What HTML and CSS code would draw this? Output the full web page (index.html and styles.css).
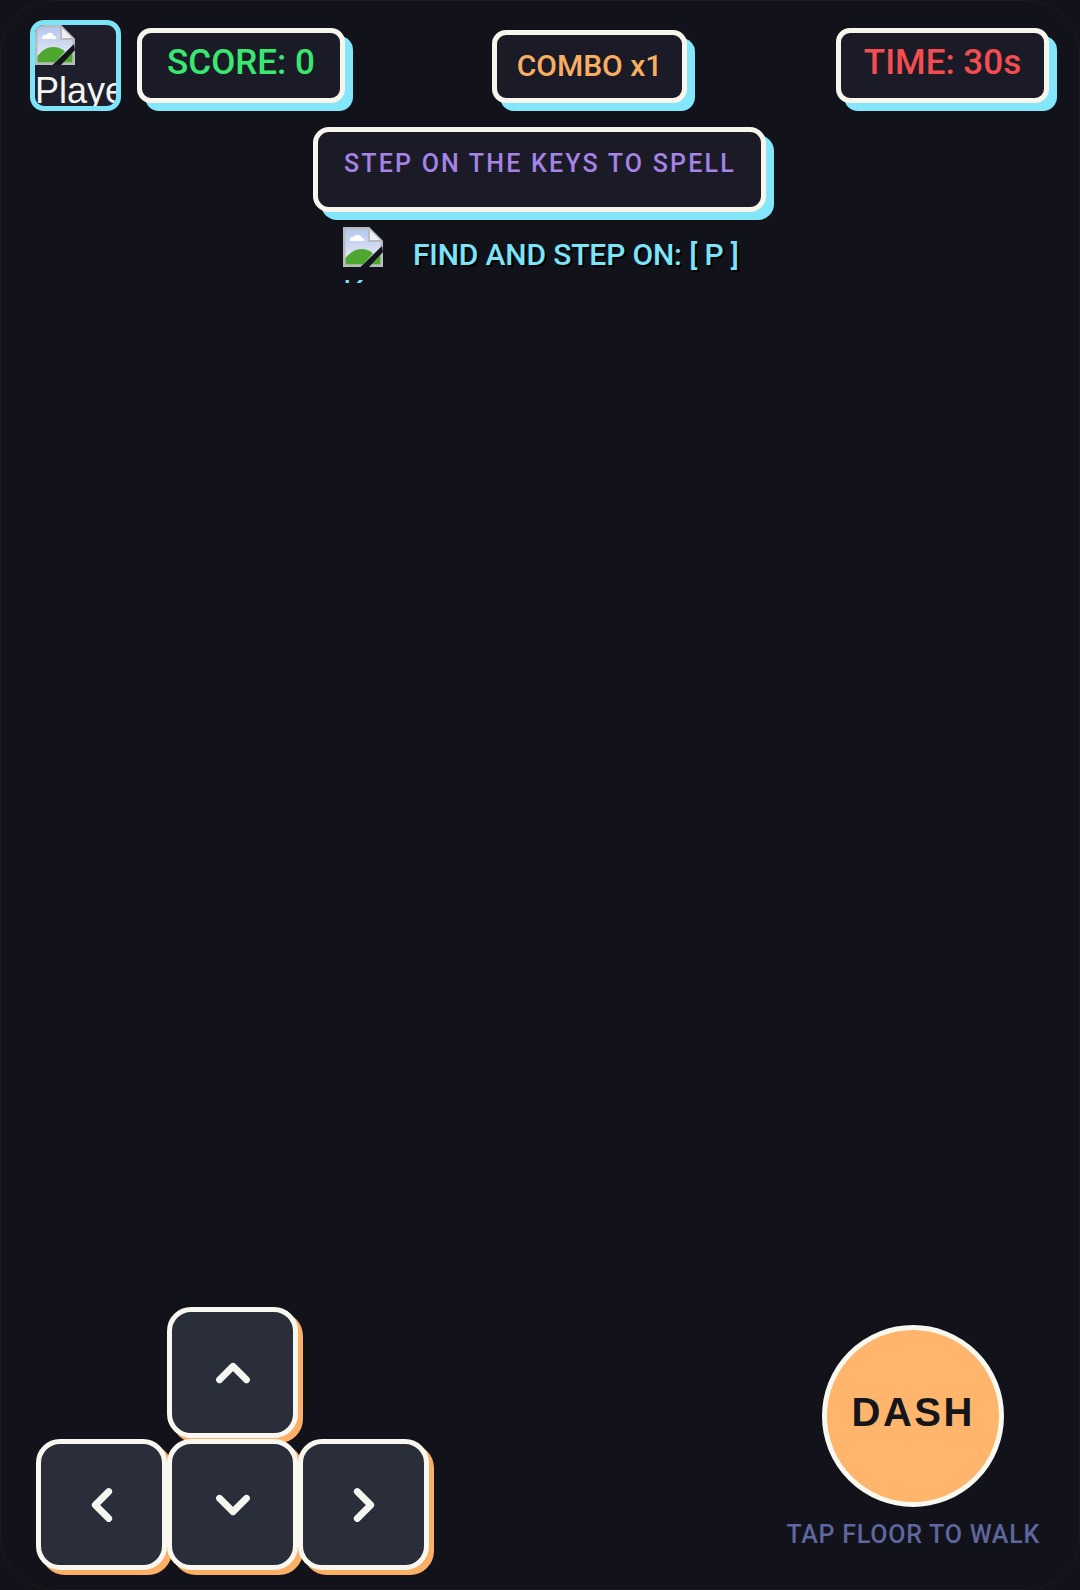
FILE: index.html
```html
<!DOCTYPE html>
<html lang="en">
<head>
<meta charset="utf-8">
<title>Key Dash</title>
<link rel="stylesheet" href="styles.css">
</head>
<body>
<svg class="defs" width="0" height="0" aria-hidden="true">
  <defs>
    <linearGradient id="sky" x1="0" y1="0" x2="0" y2="1">
      <stop offset="0" stop-color="#b4c8ee"/>
      <stop offset="1" stop-color="#eceef6"/>
    </linearGradient>
  </defs>
  <symbol id="broken" viewBox="0 0 16 16">
    <path d="M0 0H10.5L16 5.5V16H0Z" fill="#b9bbc0"/>
    <path d="M1 1H10V6H15V15H1Z" fill="url(#sky)"/>
    <path d="M10.8 1.2L14.8 5.2H10.8Z" fill="#eef0f4"/>
    <path d="M2.8 5.6a1.3 1.3 0 0 1 1.6-1.6a1.7 1.7 0 0 1 3.1 .2a1.1 1.1 0 0 1 .9 1.4Z" fill="#fff"/>
    <path d="M1 15V12.4C3 10 5 8.8 7.3 8.8C9.2 8.8 10.8 9.4 12 10.6L8 15Z" fill="#4ea72e"/>
    <path d="M12.6 12.4L15 11V15H11Z" fill="#4ea72e"/>
    <path d="M7 16L15.6 7.6L16 10L10.4 16Z" fill="#14141c"/>
  </symbol>
</svg>
<main class="frame">
  <div class="top">
    <header class="hud">
      <div class="hud-left">
        <div class="avatar">
          <svg class="broken"><use href="#broken"/></svg>
          <span class="avatar-alt">Player</span>
        </div>
        <div class="chip chip-score">SCORE: 0</div>
      </div>
      <div class="chip chip-combo">COMBO x1</div>
      <div class="chip chip-time">TIME: 30s</div>
    </header>
    <div class="banner">STEP ON THE KEYS TO SPELL</div>
    <div class="target">
      <div class="target-key">
        <svg class="broken"><use href="#broken"/></svg>
        <span class="target-alt">Key</span>
      </div>
      <span class="target-text">FIND AND STEP ON: [ P ]</span>
    </div>
  </div>
  <div class="controls">
    <div class="dpad">
      <button class="key key-up" aria-label="Up"><svg viewBox="0 0 32 32"><path d="M4 22L16 10L28 22"/></svg></button>
      <button class="key key-left" aria-label="Left"><svg viewBox="0 0 32 32"><path d="M22 4L10 16L22 28"/></svg></button>
      <button class="key key-down" aria-label="Down"><svg viewBox="0 0 32 32"><path d="M4 10L16 22L28 10"/></svg></button>
      <button class="key key-right" aria-label="Right"><svg viewBox="0 0 32 32"><path d="M10 4L22 16L10 28"/></svg></button>
    </div>
    <div class="action">
      <button class="dash">DASH</button>
      <div class="tip">TAP FLOOR TO WALK</div>
    </div>
  </div>
</main>
</body>
</html>
```
FILE: styles.css
```css
* { box-sizing: border-box; }
html, body { margin: 0; padding: 0; background: #12121a; }
body { width: 1080px; height: 1590px; overflow: hidden; font-family: Roboto, "Liberation Sans", Arial, sans-serif; }
.defs { position: absolute; }
.frame {
  width: 1080px; height: 1590px; display: flex; flex-direction: column; justify-content: space-between;
  background: #12121a; border-radius: 54px; box-shadow: inset 0 0 0 1px #1a1a1f; overflow: hidden;
}
.hud { display: flex; justify-content: space-between; align-items: center; padding: 20px 31px 0 30px; }
.hud-left { display: flex; align-items: center; gap: 16px; }
.avatar {
  width: 91px; height: 91px; border: 5px solid #7ce3f8; border-radius: 14px; background: #1e1e2c; overflow: hidden;
  color: #f5f5f0; font-family: "Liberation Sans", Arial, sans-serif; font-size: 36px; line-height: 40px; white-space: nowrap;
}
.broken { display: block; width: 40px; height: 40px; }
.avatar-alt { display: block; margin-top: 6px; }
.chip {
  display: flex; align-items: center; justify-content: center; background: #1b1b28;
  border: 5px solid #f8f6ec; border-radius: 14px; box-shadow: 8px 8px 0 #84e6fb;
  font-size: 35px; font-weight: 500; white-space: nowrap;
}
.chip-score { width: 208px; height: 75px; color: #39e86f; padding-bottom: 6px; }
.chip-combo { width: 195px; height: 73px; margin: 2px 2px 0 0; padding-bottom: 2px; color: #f9ae61; font-size: 30px; }
.chip-time { width: 213px; height: 75px; color: #f34d4f; padding-bottom: 6px; }
.banner {
  width: 453px; height: 85px; margin: 16px 0 0 313px; padding: 18px 0 0 26px; background: #1b1b28;
  border: 5px solid #f8f6ec; border-radius: 16px; box-shadow: 8px 8px 0 #84e6fb;
  color: #a683e6; font-size: 25px; font-weight: 500; line-height: 28px; letter-spacing: 2.2px; white-space: nowrap;
}
.target { display: flex; gap: 13px; margin: 15px 0 0 343px; color: #7ce3f8; }
.target-key { width: 57px; height: 56px; overflow: hidden; font-size: 33px; line-height: 34px; }
.target-alt { display: block; margin-top: 9px; }
.target-text { font-size: 30px; font-weight: 500; letter-spacing: -0.15px; line-height: 34px; padding-top: 11px; text-shadow: 2px 2px 0 #000; white-space: nowrap; }
.controls { display: flex; justify-content: space-between; align-items: flex-start; padding: 0 40px 20px 36px; }
.dpad { display: grid; grid-template-columns: repeat(3, 130px); grid-template-rows: repeat(2, 131px); gap: 1px; }
.key {
  display: flex; align-items: center; justify-content: center; padding: 0; width: 131px; height: 131px;
  background: #2a2d3a; border: 5px solid #f8f8f0; border-radius: 24px; box-shadow: 5px 5px 0 #fbb066;
}
.key svg { width: 36px; height: 36px; fill: none; stroke: #f6f6f0; stroke-width: 6; stroke-linecap: round; stroke-linejoin: round; }
.key-up { grid-column: 2; grid-row: 1; }
.key-left { grid-column: 1; grid-row: 2; }
.key-down { grid-column: 2; grid-row: 2; }
.key-right { grid-column: 3; grid-row: 2; }
.action { display: flex; flex-direction: column; align-items: center; margin-top: 18px; }
.dash {
  width: 182px; height: 182px; border-radius: 50%; padding: 0 0 8px; background: #ffb56b; border: 5px solid #f9f8f0;
  color: #15151c; font: bold 40px "Liberation Sans", Arial, sans-serif; letter-spacing: 2.5px;
}
.tip { margin-top: 13px; margin-bottom: -2px; color: #5d669e; font-size: 25px; font-weight: 500; line-height: 30px; letter-spacing: 0.75px; white-space: nowrap; }
```
